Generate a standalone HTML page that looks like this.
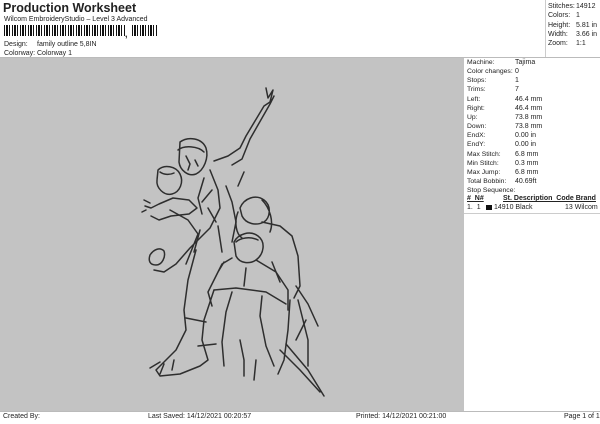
<!DOCTYPE html>
<html><head><style>
body{margin:0;width:600px;height:424px;background:#fff;font-family:"Liberation Sans",sans-serif;position:relative;overflow:hidden;color:#222}
.a{position:absolute;white-space:nowrap;font-size:7px}
</style></head><body>
<div class="a" style="left:3px;top:1px;font-size:12.5px;font-weight:bold">Production Worksheet</div>
<div class="a" style="left:4px;top:16px">Wilcom EmbroideryStudio – Level 3 Advanced</div>
<div class="a" style="left:4px;top:25px;height:11px;width:153px;background:repeating-linear-gradient(90deg,#111 0 1px,#fff 1px 2px,#111 2px 4px,#fff 4px 5px,#111 5px 6px,#fff 6px 8px)"></div>
<div class="a" style="left:125px;top:25px;width:5px;height:14px;background:#fff;font-weight:bold;font-size:9px;line-height:18px">,</div>
<div class="a" style="left:4px;top:41px">Design:</div><div class="a" style="left:37px;top:41px">family outline 5,8IN</div>
<div class="a" style="left:4px;top:50px">Colorway:</div><div class="a" style="left:37px;top:50px">Colorway 1</div>
<div class="a" style="left:0;top:57px;width:600px;height:1px;background:#bbb"></div>
<div class="a" style="left:545px;top:0;width:1px;height:57px;background:#ccc"></div>
<div class="a" style="left:548px;top:2px;line-height:9.3px">Stitches:<br>Colors:<br>Height:<br>Width:<br>Zoom:</div>
<div class="a" style="left:576px;top:2px;line-height:9.3px">14912<br>1<br>5.81 in<br>3.66 in<br>1:1</div>
<div class="a" style="left:0;top:58px;width:464px;height:353px;background:#c3c3c3"></div>
<div class="a" style="left:467px;top:58px;line-height:9.15px;font-size:6.8px">Machine:<br>Color changes:<br>Stops:<br>Trims:<br>Left:<br>Right:<br>Up:<br>Down:<br>EndX:<br>EndY:<br>Max Stitch:<br>Min Stitch:<br>Max Jump:<br>Total Bobbin:<br>Stop Sequence:</div>
<div class="a" style="left:515px;top:58px;line-height:9.15px">Tajima<br>0<br>1<br>7<br>46.4 mm<br>46.4 mm<br>73.8 mm<br>73.8 mm<br>0.00 in<br>0.00 in<br>6.8 mm<br>0.3 mm<br>6.8 mm<br>40.69ft</div>
<div class="a" style="left:467px;top:195px;font-weight:bold;text-decoration:underline">#&nbsp;&nbsp;N#</div>
<div class="a" style="left:503px;top:195px;font-weight:bold;text-decoration:underline">St.&nbsp;Description&nbsp;&nbsp;Code&nbsp;Brand</div>
<div class="a" style="left:467px;top:204px">1.&nbsp;&nbsp;1</div>
<div class="a" style="left:486px;top:205px;width:6px;height:5px;background:#111"></div>
<div class="a" style="left:494px;top:204px">14910&nbsp;Black</div>
<div class="a" style="left:565px;top:204px">13&nbsp;Wilcom</div>
<div class="a" style="left:464px;top:213px;width:136px;height:1px;background:#ccc"></div>
<div class="a" style="left:0;top:411px;width:600px;height:1px;background:#bbb"></div>
<div class="a" style="left:3px;top:413px">Created By:</div>
<div class="a" style="left:148px;top:413px">Last Saved: 14/12/2021 00:20:57</div>
<div class="a" style="left:356px;top:413px">Printed: 14/12/2021 00:21:00</div>
<div class="a" style="left:564px;top:413px">Page 1 of 1</div>
<svg class="a" style="left:0;top:0" width="600" height="424" fill="none" stroke="#2e2e2e" stroke-width="1.5" stroke-linejoin="round" stroke-linecap="round">
<path d="M266 88l2 10 5-8-3 12-6 4-18 30-6 12-12 8-14 5M274 96l-4 8-20 35-8 20-10 6"/>
<path d="M180 142c8-6 22-4 26 6 3 10-2 22-10 26-8 3-16-4-17-12z M178 150c6-5 20-4 26 2"/>
<path d="M186 156l4 8-2 6M195 160l3 6"/>
<path d="M158 170c6-6 18-4 22 4 4 8 0 18-8 20-8 2-16-6-15-14z M160 172c4 3 10 3 14 1"/>
<path d="M145 206l6 2 8-4 14-6 16 2 8 8-8 6-18 2-12 4-8-4M150 203l-6-3M146 210l-4 2"/>
<path d="M210 170l8 20 2 18-10 20-20 20-14 16-12 8-10-2M208 208l8 14M170 210l18 10 10 14-12 30"/>
<path d="M150 255c4-6 10-8 14-4 2 6-2 14-8 14-6 0-8-4-6-10z"/>
<path d="M226 186l6 16 4 20 -4 20"/>
<path d="M240 208c4-10 16-14 24-8 8 6 6 18 0 22-8 4-18 2-22-6z M238 212c-4 10-2 22 4 26M262 200c8 8 12 22 8 32"/>
<path d="M234 242c4-8 16-12 24-6 8 6 6 18-2 24-6 4-16 4-20-4z M236 242c4-4 14-6 22-2"/>
<path d="M262 222l18 4 12 10 6 20 2 30-6 12M296 286l12 18 10 22M232 258l-10 6-8 16-6 12 4 14M224 262l-6 10M256 260l20 12 12 18 0 20"/>
<path d="M214 290l22 -2 30 4 20 12M232 292l-6 20 -4 30 2 24M262 296l-2 20 6 30 8 20M290 300l-2 30-4 30-6 14"/>
<path d="M196 250l-8 30-4 30 2 20-10 20-14 14-6 6 4 6 20-2 20-8 8-6-6-20 2-20 10-30M150 368l10-6M160 374l4-10M172 370l2-10"/>
<path d="M280 350l20 20 20 22M286 344l22 26 16 26M240 340l4 20 0 16M256 360l-2 20M298 300l10 40 0 26"/>
<path d="M204 178l-6 20 4 16M200 230l-6 22M218 226l4 26M244 172l-6 14M212 190l-10 12M186 318l20 4M198 346l18-2M272 262l8 20M246 268l-2 18M306 320l-10 20"/>
</svg>
</body></html>
